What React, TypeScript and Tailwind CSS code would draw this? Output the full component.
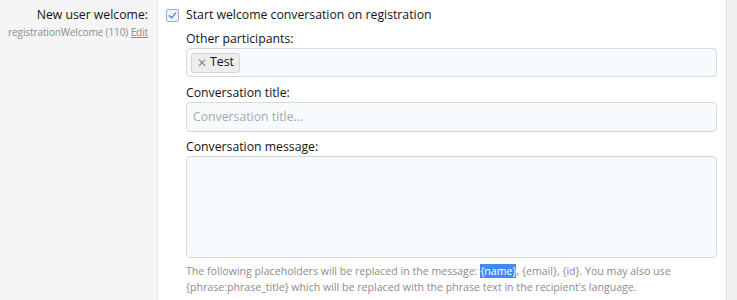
import React from 'react';

const font = { fontFamily: '"Segoe UI", "Open Sans", "Noto Sans", sans-serif' };

const App: React.FC = () => {
  return (
    <div className="w-[737px] h-[300px] overflow-hidden bg-[#f0f0f0] flex text-[#141414]" style={font}>
      {/* label column */}
      <div className="w-[158px] shrink-0 bg-[#f5f5f5] border-r border-[#e6e6e6] pr-[9px] pt-[5px] text-right">
        <div className="text-[12.25px] leading-[20px] text-[#141414]">New user welcome:</div>
        <div className="text-[10px] leading-[14px] text-[#8c8c8c] tracking-[-0.1px]">
          registrationWelcome (110) <span className="underline">Edit</span>
        </div>
      </div>

      {/* form column */}
      <div className="w-[569px] shrink-0 bg-white border-r border-[#e2e2e2] pl-[8px] pr-[9px] pt-[5px]">
        <label className="flex items-center gap-[7px] h-[20px]">
          <span className="w-[13px] h-[13px] border border-[#94b3d6] bg-[#eef4fb] rounded-[2px] flex items-center justify-center">
            <svg width="9" height="9" viewBox="0 0 10 10" fill="none">
              <path d="M1.5 5.2 L4 7.6 L8.6 2.4" stroke="#4a86c8" strokeWidth="1.5" strokeLinecap="round" strokeLinejoin="round" />
            </svg>
          </span>
          <span className="text-[12.25px]">Start welcome conversation on registration</span>
        </label>

        <div className="pl-[20px]">
          <div className="text-[12.25px] leading-[18px] mt-[5px]">Other participants:</div>
          <div className="h-[29px] rounded-[4px] border border-[#d8d8d8] bg-[#f8fbfd] flex items-center px-[4px]">
            <span className="h-[20px] flex items-center gap-[3px] px-[5px] rounded-[3px] border border-[#d4d4d4] bg-[#ededed] text-[12.25px] text-[#141414]">
              <span className="text-[#8c8c8c] text-[11.5px]">✕</span>Test
            </span>
          </div>

          <div className="text-[12.25px] leading-[18px] mt-[7px]">Conversation title:</div>
          <div className="h-[30px] rounded-[4px] border border-[#d8d8d8] bg-[#f8fbfd] flex items-center px-[6px] text-[12.25px] text-[#a8a8a8]">
            Conversation title...
          </div>

          <div className="text-[12.25px] leading-[18px] mt-[6px]">Conversation message:</div>
          <div className="h-[102px] rounded-[4px] border border-[#d8d8d8] bg-[#f8fbfd]"></div>

          <p className="mt-[5px] text-[10.6px] leading-[16px] text-[#8c8c8c]">
            The following placeholders will be replaced in the message:{' '}
            <span className="bg-[#3f8cf0] text-white">{'{name}'}</span>, {'{email}'}, {'{id}'}. You may also use
            <br />
            {'{phrase:phrase_title}'} which will be replaced with the phrase text in the recipient's language.
          </p>
        </div>
      </div>
    </div>
  );
};

export default App;
